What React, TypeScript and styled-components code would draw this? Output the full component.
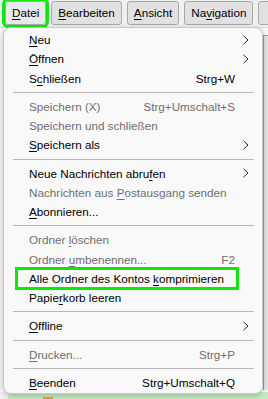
import styled, { createGlobalStyle } from 'styled-components'

const GlobalStyle = createGlobalStyle`
  html, body {
    margin: 0;
    padding: 0;
    background: #f0f0f0;
  }
  body {
    font-family: "Liberation Sans", Arial, sans-serif;
  }
`

const Page = styled.div`
  position: relative;
  width: 268px;
  height: 399px;
  overflow: hidden;
  display: flex;
  flex-direction: column;
  background: #f0f0f0;
`

const Toolbar = styled.div`
  height: 28px;
  display: flex;
  align-items: flex-start;
  gap: 5px;
  padding: 1px 0 0 5px;
  box-sizing: border-box;
  background: #f0f0f0;
  border-bottom: 1px solid #dcdcdc;
`

const MenuButton = styled.button<{ $open?: boolean }>`
  flex: none;
  height: 24px;
  padding: 0 6px;
  border: 1px solid #a9a9a9;
  border-radius: 3px;
  background: ${({ $open }) => ($open ? '#e9e9ef' : '#e1e1e1')};
  outline: ${({ $open }) => ($open ? '3px solid #0ce80c' : 'none')};
  font-family: "Liberation Sans", Arial, sans-serif;
  font-size: 11.7px;
  color: #000;
  line-height: 22px;
`

const Workspace = styled.div`
  flex: 1;
  display: flex;
  justify-content: flex-end;
  padding-top: 7px;
  background: #f7f7f7;
`

const SidePanel = styled.div`
  width: 4px;
  margin-bottom: 2px;
  border-left: 1px solid #9c9c9c;
  border-top: 1px solid #9c9c9c;
  background: #e4e4e4;
`

const StatusStrip = styled.div`
  height: 7px;
  margin-left: 8px;
  background: #c3efbe;
  position: relative;

  &::before {
    content: '';
    position: absolute;
    left: 35px;
    bottom: 0;
    width: 10px;
    height: 2px;
    background: #e8a33a;
  }
`

const Menu = styled.div`
  position: absolute;
  left: 3px;
  top: 27px;
  width: 260px;
  box-sizing: border-box;
  padding: 2px 0 1px;
  background: #f9f9f9;
  border: 1px solid #c9c9c9;
  border-radius: 8px;
  box-shadow: 0 2px 6px rgba(0, 0, 0, 0.22);
`

const Row = styled.div<{ $disabled?: boolean; $focused?: boolean }>`
  position: relative;
  height: 19.25px;
  display: grid;
  grid-template-columns: 1fr auto 27px;
  align-items: center;
  padding-left: 25px;
  font-size: 11.7px;
  color: ${({ $disabled }) => ($disabled ? '#6f6f6f' : '#000')};
  white-space: nowrap;

  &::after {
    content: '';
    display: ${({ $focused }) => ($focused ? 'block' : 'none')};
    position: absolute;
    left: 11px;
    right: 23px;
    top: -2px;
    bottom: -2px;
    border: 3px solid #0ce80c;
  }
`

const Shortcut = styled.span`
  text-align: right;
`

const Arrow = styled.svg`
  margin-left: 8px;
  display: block;
`

const Separator = styled.div`
  height: 1px;
  margin: 4px 8px 4px 9px;
  background: #b9b9b9;
`

const Key = styled.u`
  text-decoration-thickness: 1px;
  text-underline-offset: 2px;
`

function Label({ text }: { text: string }) {
  const i = text.indexOf('&')
  if (i < 0) return <>{text}</>
  return (
    <>
      {text.slice(0, i)}
      <Key>{text[i + 1]}</Key>
      {text.slice(i + 2)}
    </>
  )
}

type Item =
  | { sep: true }
  | { label: string; shortcut?: string; sub?: boolean; disabled?: boolean; focused?: boolean }

const items: Item[] = [
  { label: '&Neu', sub: true },
  { label: '&Öffnen', sub: true },
  { label: 'S&chließen', shortcut: 'Strg+W' },
  { sep: true },
  { label: 'Speichern (X)', shortcut: 'Strg+Umschalt+S', disabled: true },
  { label: 'Speichern und schließen', disabled: true },
  { label: '&Speichern als', sub: true },
  { sep: true },
  { label: 'Neue Nachrichten abru&fen', sub: true },
  { label: 'Nachrichten aus &Postausgang senden', disabled: true },
  { label: '&Abonnieren...' },
  { sep: true },
  { label: 'Ordner &löschen', disabled: true },
  { label: 'Ordner &umbenennen...', shortcut: 'F2', disabled: true },
  { label: 'Alle Ordner des Kontos &komprimieren', focused: true },
  { label: 'Papie&rkorb leeren' },
  { sep: true },
  { label: '&Offline', sub: true },
  { sep: true },
  { label: '&Drucken...', shortcut: 'Strg+P', disabled: true },
  { sep: true },
  { label: '&Beenden', shortcut: 'Strg+Umschalt+Q' },
]

const buttons = ['&Datei', '&Bearbeiten', '&Ansicht', 'Na&vigation', '']

export default function App() {
  return (
    <>
      <GlobalStyle />
      <Page>
        <Toolbar>
          {buttons.map((b, i) => (
            <MenuButton key={i} $open={i === 0}>
              <Label text={b} />
            </MenuButton>
          ))}
        </Toolbar>
        <Workspace>
          <SidePanel />
        </Workspace>
        <StatusStrip />

        <Menu>
          {items.map((it, i) =>
            'sep' in it ? (
              <Separator key={i} />
            ) : (
              <Row key={i} $disabled={it.disabled} $focused={it.focused}>
                <span>
                  <Label text={it.label} />
                </span>
                <Shortcut>{it.shortcut}</Shortcut>
                {it.sub ? (
                  <Arrow width="6" height="10" viewBox="0 0 6 10">
                    <path d="M0.5 0.8 L5 5 L0.5 9.2" fill="none" stroke="#222" strokeWidth="1" />
                  </Arrow>
                ) : (
                  <span />
                )}
              </Row>
            ),
          )}
        </Menu>
      </Page>
    </>
  )
}
